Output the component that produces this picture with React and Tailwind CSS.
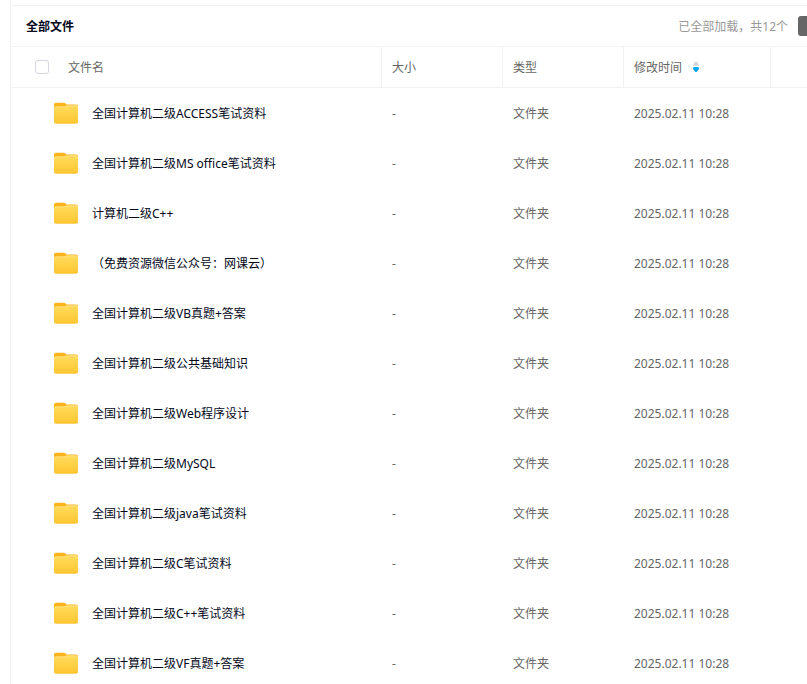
import { useState } from "react";

const MODIFIED = "2025.02.11 10:28";

const files = [
  "全国计算机二级ACCESS笔试资料",
  "全国计算机二级MS office笔试资料",
  "计算机二级C++",
  "（免费资源微信公众号：网课云）",
  "全国计算机二级VB真题+答案",
  "全国计算机二级公共基础知识",
  "全国计算机二级Web程序设计",
  "全国计算机二级MySQL",
  "全国计算机二级java笔试资料",
  "全国计算机二级C笔试资料",
  "全国计算机二级C++笔试资料",
  "全国计算机二级VF真题+答案",
];

function FolderIcon() {
  return (
    <svg width="24" height="22" viewBox="0 0 24 22" className="shrink-0" aria-hidden="true">
      <defs>
        <linearGradient id="folder-front" x1="0" y1="0" x2="0" y2="1">
          <stop offset="0" stopColor="#ffdb5c" />
          <stop offset="1" stopColor="#ffc632" />
        </linearGradient>
      </defs>
      <path d="M0 2.8Q0 .8 2 .8H9.6Q10.8 .8 11.6 1.6L12.6 2.5H22Q24 2.5 24 4.5V12H0Z" fill="#fcb41c" />
      <path d="M0 6.2Q0 4.4 2 4.4H9.6Q10.8 4.4 11.6 4L12.2 3.7Q12.8 3.4 13.8 3.4H22.2Q24 3.6 24 5.4V19.5Q24 21.5 22 21.5H2Q0 21.5 0 19.5Z" fill="url(#folder-front)" />
      <path d="M.5 6.4Q.6 4.9 2 4.9H9.8Q11 4.9 11.8 4.5Q12.6 3.9 13.8 3.9H22Q23.4 4 23.5 5.5" fill="none" stroke="#ffe594" strokeWidth=".8" />
      <path d="M.3 20Q.6 21.2 2 21.2H22Q23.4 21.2 23.7 20" fill="none" stroke="#fcbd28" strokeWidth=".6" />
    </svg>
  );
}

function SortIcon() {
  return (
    <svg width="6" height="12" viewBox="0 0 6 12" aria-hidden="true">
      <path d="M2 1Q3 -.5 4 1L6 3.5Q6 5 5 5H1Q0 5 0 3.5Z" fill="#d4d7de" />
      <path d="M2 10.5Q3 12 4 10.5L6 8Q6 6 5 6H1Q0 6 0 8Z" fill="#06a7ff" />
    </svg>
  );
}

const headCell = "h-[41px] border-b border-[#f1f2f4] p-0 text-left font-normal";
const bodyCell = "p-0 pt-0.5 pl-2.5 whitespace-nowrap";

export default function App() {
  const [ascending, setAscending] = useState(false);
  const rows = ascending ? [...files].reverse() : files;

  return (
    <div className="h-screen overflow-hidden bg-white pl-2.5 font-['Noto_Sans','Noto_Sans_CJK_SC',sans-serif] text-xs text-[#636674]">
      <main className="min-h-full border-l border-[#f1f2f4] pt-[5px]">
        <header className="flex h-[42px] items-center justify-between border-y border-[#f1f2f4] pl-[15px]">
          <h1 className="pt-0.5 font-bold text-[#03081a]">全部文件</h1>
          <div className="flex items-center gap-2.5">
            <span className="pt-0.5 text-[#999]">已全部加载，共12个</span>
            <button type="button" aria-label="更多" className="h-5 w-[9px] rounded-l-[3px] bg-[#666]" />
          </div>
        </header>
        <table className="w-full table-fixed border-separate border-spacing-0">
          <colgroup>
            <col />
            <col className="w-[121px]" />
            <col className="w-[121px]" />
            <col className="w-[147px]" />
            <col className="w-9" />
          </colgroup>
          <thead className="text-[#666]">
            <tr>
              <th className={`${headCell} border-r`}>
                <div className="flex items-center gap-[19px] pl-6">
                  <input
                    type="checkbox"
                    aria-label="全选"
                    className="size-[14px] appearance-none rounded-[3px] border border-[#d4d7de] bg-white checked:bg-[#06a7ff]"
                  />
                  <span className="pt-0.5">文件名</span>
                </div>
              </th>
              <th className={`${headCell} border-r`}>
                <div className="pt-0.5 pl-2.5">大小</div>
              </th>
              <th className={`${headCell} border-r`}>
                <div className="pt-0.5 pl-2.5">类型</div>
              </th>
              <th className={`${headCell} border-r`}>
                <button type="button" className="flex items-center gap-[11px] pl-2.5" onClick={() => setAscending(!ascending)}>
                  <span className="pt-0.5">修改时间</span>
                  <SortIcon />
                </button>
              </th>
              <th className={headCell} />
            </tr>
          </thead>
          <tbody className="text-[#666]">
            {rows.map((name) => (
              <tr key={name}>
                <td className="h-[50px] p-0">
                  <a href="#" className="flex items-center gap-[14px] pl-[43px] whitespace-nowrap text-[#03081a]">
                    <FolderIcon />
                    <span className="pt-0.5">{name}</span>
                  </a>
                </td>
                <td className={bodyCell}>-</td>
                <td className={bodyCell}>文件夹</td>
                <td className={bodyCell}>{MODIFIED}</td>
                <td className="p-0" />
              </tr>
            ))}
          </tbody>
        </table>
      </main>
    </div>
  );
}
